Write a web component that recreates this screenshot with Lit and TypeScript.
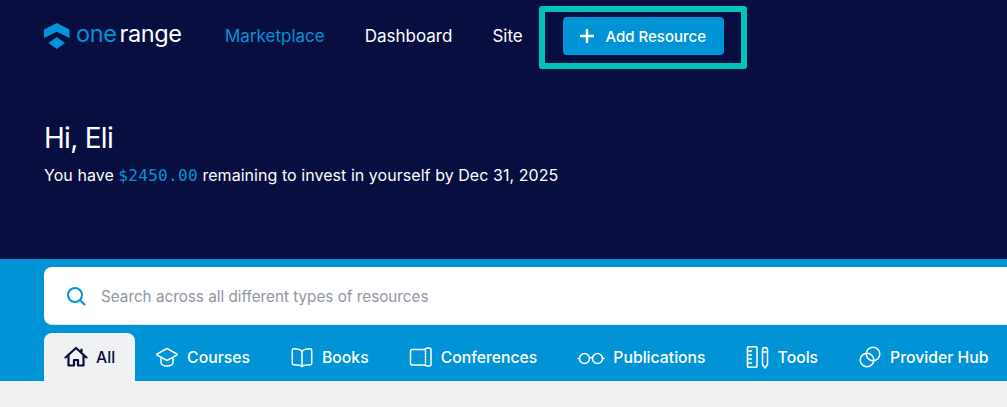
import { LitElement, css, html, svg } from 'lit';
import { customElement } from 'lit/decorators.js';
import { classMap } from 'lit/directives/class-map.js';

const TABS = [
  {
    label: 'Courses',
    icon: svg`<path d="M12 3.500 1.800 9.200a.4.4 0 0 0 0 .6L12 15.500l10.200-5.700a.4.4 0 0 0 0-.6z"/><path d="M6 13v4.500c0 2 2.800 3.500 6 3.500s6-1.500 6-3.500V13"/>`,
  },
  {
    label: 'Books',
    icon: svg`<path d="M12 6.500C10.500 4.500 8.500 3.800 3.800 3.800a1.500 1.500 0 0 0-1.500 1.500v13a1.500 1.500 0 0 0 1.500 1.500c4.700 0 6.700.4 8.200 1.700 1.500-1.300 3.500-1.700 8.200-1.700a1.500 1.500 0 0 0 1.500-1.500v-13a1.500 1.500 0 0 0-1.500-1.500c-4.700 0-6.700.7-8.200 2.700z"/><path d="M12 6.500v15"/>`,
  },
  {
    label: 'Conferences',
    icon: svg`<path d="M16 4.500H3.500a2 2 0 0 0-2 2v11.500a2 2 0 0 0 2 2H16"/><path d="M16 4.500c.6-1 1.500-1.500 2.500-1.500h1.500a2 2 0 0 1 2 2v14a2 2 0 0 1-2 2h-1.500c-1 0-1.900-.5-2.500-1"/><path d="M16.500 6v13" stroke-dasharray="1.200 1.500"/>`,
  },
  {
    label: 'Publications',
    wide: true,
    icon: svg`<circle cx="7.500" cy="13.500" r="5"/><circle cx="20.500" cy="13.500" r="5"/><path d="M12.500 13c.9-.6 2.100-.6 3 0M2.500 13.500H1M25.500 13.500H27"/>`,
  },
  {
    label: 'Tools',
    icon: svg`<rect x="1.500" y="1.800" width="9.500" height="20.500" rx="1.200"/><path d="M1.500 6h4M1.500 10h4M1.500 14h4M1.500 18h4"/><path d="M16.500 5a2.500 2.500 0 0 1 5 0v14.500l-2.500 3.500-2.500-3.500z"/><path d="M16.500 7h5"/>`,
  },
  {
    label: 'Provider Hub',
    icon: svg`<circle cx="9" cy="15" r="6.800"/><circle cx="15" cy="9" r="6.800"/>`,
  },
];

@customElement('app-root')
export class AppRoot extends LitElement {
  static styles = css`
    :host {
      display: block;
      height: 407px;
      overflow: hidden;
      background: #f0f1f3;
      font-family: Inter, 'Liberation Sans', sans-serif;
      color: #fff;
    }

    .hero {
      height: 259px;
      box-sizing: border-box;
      padding: 17px 0 0 44px;
      background: #080e40;
    }

    .nav {
      display: flex;
      align-items: center;
      height: 38px;
      font-size: 17px;
    }

    .logo {
      display: flex;
      align-items: center;
      width: 181px;
      gap: 6px;
    }

    .logo-text {
      font-family: Inter, sans-serif;
      font-size: 23.500px;
      font-weight: 400;
      letter-spacing: -0.4px;
      line-height: 1;
      margin-bottom: 4px;
      color: #0094d7;
    }

    .logo-text b {
      font-weight: 400;
      color: #fff;
      margin-left: 3px;
    }

    .links {
      display: flex;
      gap: 40px;
    }

    .links a.active {
      color: #0094d7;
    }

    .add-wrap {
      position: relative;
      margin-left: 40px;
    }

    .add {
      display: flex;
      align-items: center;
      justify-content: center;
      gap: 11px;
      width: 161px;
      height: 38px;
      border-radius: 4px;
      background: #0094d7;
      font-size: 15px;
      font-weight: 500;
    }

    .highlight {
      position: absolute;
      left: -24px;
      top: -11px;
      width: 208px;
      height: 63px;
      box-sizing: border-box;
      border: 6.500px solid #00c4b8;
      border-radius: 3px;
    }

    h1 {
      margin: 66px 0 0;
      font-size: 28px;
      font-weight: 400;
      letter-spacing: -0.7px;
      line-height: 34px;
    }

    .remaining {
      margin: 8px 0 0;
      font-size: 16px;
      line-height: 24px;
      letter-spacing: 0.05px;
    }

    .amount {
      font-family: 'DejaVu Sans Mono', monospace;
      font-size: 16px;
      letter-spacing: 0.3px;
      color: #0094d7;
    }

    .band {
      height: 122px;
      box-sizing: border-box;
      padding: 8px 0 0 44px;
      background: #0094d7;
      overflow: hidden;
    }

    .search {
      display: flex;
      align-items: center;
      gap: 15px;
      height: 58px;
      box-sizing: border-box;
      padding: 1px 0 0 22px;
      width: 1000px;
      border-radius: 8px 0 0 8px;
      background: #fff;
      border-bottom: 1px solid #dfe1e6;
      color: #9096a3;
      font-size: 15.250px;
    }

    .search svg {
      flex: none;
    }

    .tabs {
      display: flex;
      margin-top: 8px;
      height: 48px;
      white-space: nowrap;
    }

    .tab {
      display: flex;
      align-items: center;
      gap: 8px;
      padding: 0 20px;
      font-size: 15.750px;
      font-weight: 500;
      border-radius: 8px 8px 0 0;
    }

    .tab.active {
      background: #f0f1f3;
      color: #080e40;
    }

    .tab svg {
      flex: none;
      width: 24px;
      height: 24px;
      fill: none;
      stroke: currentColor;
      stroke-width: 1.500;
      stroke-linecap: round;
      stroke-linejoin: round;
    }

    .tab.active svg {
      stroke-width: 2.200;
    }

    .tab.wide svg {
      width: 28px;
    }
  `;

  render() {
    return html`
      <div class="hero">
        <nav class="nav">
          <div class="logo">
            <svg width="26" height="26" viewBox="0 0 26 26">
              <path fill="#0094d7" d="M12.800 0 25.500 6.500V15L12.800 8.800 0 15V6.500z" />
              <path fill="#0094d7" d="M12.800 14 21 20l-8.200 6L4.500 20z" />
            </svg>
            <span class="logo-text">one<b>range</b></span>
          </div>
          <div class="links">
            <a class="active">Marketplace</a>
            <a>Dashboard</a>
            <a>Site</a>
          </div>
          <div class="add-wrap">
            <div class="add">
              <svg width="14" height="14" viewBox="0 0 14 14">
                <path d="M7 0v14M0 7h14" stroke="#fff" stroke-width="2.400" />
              </svg>
              Add Resource
            </div>
            <div class="highlight"></div>
          </div>
        </nav>
        <h1>Hi, Eli</h1>
        <p class="remaining">
          You have <span class="amount">$2450.00</span> remaining to invest in
          yourself by Dec 31, 2025
        </p>
      </div>
      <div class="band">
        <div class="search">
          <svg width="20" height="20" viewBox="0 0 20 20" fill="none" stroke="#0094d7" stroke-width="2" stroke-linecap="round">
            <circle cx="9" cy="9" r="7" />
            <path d="m14.200 14.200 4.300 4.300" />
          </svg>
          Search across all different types of resources
        </div>
        <div class="tabs">
          <div class="tab active">
            <svg viewBox="0 0 24 24">
              <path d="M1.500 12.500 12 3l10.500 9.500M4.500 10v10.500h5.500V15h4v5.500h5.500V10M17.500 8V4.500" />
            </svg>
            All
          </div>
          ${TABS.map(
            (tab) => html`
              <div class=${classMap({ tab: true, wide: !!tab.wide })}>
                <svg viewBox=${tab.wide ? '0 0 28 24' : '0 0 24 24'}>${tab.icon}</svg>
                ${tab.label}
              </div>
            `
          )}
        </div>
      </div>
    `;
  }
}
